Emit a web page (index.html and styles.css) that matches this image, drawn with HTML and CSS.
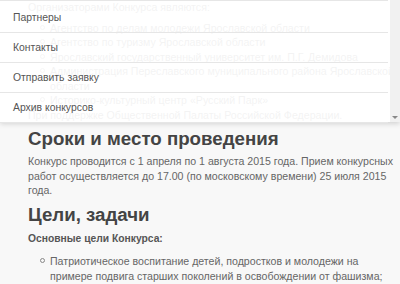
FILE: index.html
```html
<!DOCTYPE html>
<html lang="ru">
<head>
    <meta charset="UTF-8">
    <meta name="viewport" content="width=device-width, initial-scale=1.0">
    <title>Конкурс</title>
    <link rel="stylesheet" href="styles.css">
</head>
<body>
    <nav class="menu">
        <ul class="menu-list">
            <li><a href="#">Партнеры</a></li>
            <li><a href="#">Контакты</a></li>
            <li><a href="#">Отправить заявку</a></li>
            <li><a href="#">Архив конкурсов</a></li>
        </ul>
        <div class="menu-scroll"><span class="arrow"></span></div>
    </nav>

    <div class="content">
        <p>Организаторами Конкурса являются:</p>
        <ul class="list">
            <li>Агентство по делам молодежи Ярославской области</li>
            <li>Агентство по туризму Ярославской области</li>
            <li>Ярославский государственный университет им. П.Г. Демидова</li>
            <li>Администрация Переславского муниципального района Ярославской области</li>
            <li>Историко-культурный центр «Русский Парк»</li>
        </ul>
        <p>При поддержке Общественной Палаты Российской Федерации.</p>

        <h2>Сроки и место проведения</h2>
        <p class="text">Конкурс проводится с 1 апреля по 1 августа 2015 года. Прием конкурсных работ осуществляется до 17.00 (по московскому времени) 25 июля 2015 года.</p>

        <h2>Цели, задачи</h2>
        <p class="lead">Основные цели Конкурса:</p>
        <ul class="list goals">
            <li>Патриотическое воспитание детей, подростков и молодежи на примере подвига старших поколений в освобождении от фашизма;</li>
            <li>Формирование у подрастающего поколения уважения к истории своей страны;</li>
        </ul>
    </div>
</body>
</html>
```

FILE: styles.css
```css
body {
    margin: 0;
    height: 284px;
    background-color: #f8f8f8;
    font-family: 'Liberation Sans', Arial, sans-serif;
    color: #666;
    font-size: 10.6px;
    line-height: 14.5px;
    overflow: hidden;
}
.menu {
    position: absolute;
    top: 0;
    left: 0;
    right: 0;
    height: 122px;
    display: flex;
    background: rgba(255, 255, 255, 0.92);
    box-shadow: 0 2px 5px rgba(0,0,0,0.15);
    z-index: 10;
}
.menu-list {
    list-style: none;
    margin: 0;
    padding: 2px 0 0 0;
    flex: 1;
    border-top: 1px solid #e6e6e6;
}
.menu-list li {
    border-bottom: 1px solid #e6e6e6;
}
.menu-list a {
    display: block;
    height: 29px;
    line-height: 29px;
    padding-left: 13px;
    font-size: 10.4px;
    color: #555;
    text-decoration: none;
}
.menu-scroll {
    width: 10px;
    margin-left: 2px;
    background: #f1f1f1;
    display: flex;
    align-items: flex-end;
    justify-content: center;
    padding-bottom: 3px;
}
.arrow {
    width: 0;
    height: 0;
    border-left: 3px solid transparent;
    border-right: 3px solid transparent;
    border-top: 3px solid #888;
}
.content {
    padding: 0 4px 0 28px;
}
p {
    margin: 0;
}
.list {
    margin: 6px 0 0 0;
    padding-left: 22px;
    list-style: none;
}
.list li::before {
    content: "";
    display: inline-block;
    width: 3px;
    height: 3px;
    border: 1px solid #888;
    border-radius: 50%;
    margin-left: -10px;
    margin-right: 5px;
    vertical-align: 2px;
}
h2 {
    margin: 6px 0 4px 0;
    font-size: 18.7px;
    line-height: 22px;
    color: #444;
}
.lead {
    margin-top: 6px;
    font-weight: bold;
    font-size: 10.3px;
    color: #555;
}
.goals {
    margin-top: 8px;
}
```
